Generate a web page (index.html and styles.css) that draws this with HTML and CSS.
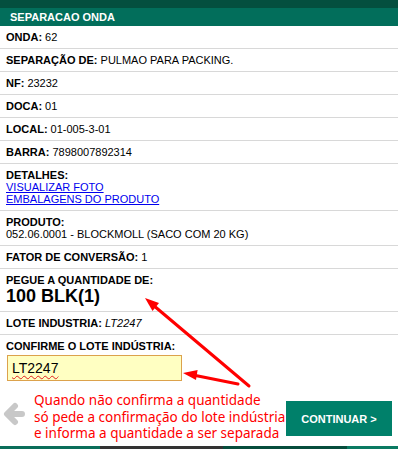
FILE: index.html
```html
<!DOCTYPE html>
<html lang="pt-BR">
<head>
    <meta charset="UTF-8">
    <meta name="viewport" content="width=device-width, initial-scale=1.0">
    <title>Separacao Onda</title>
    <link rel="stylesheet" href="styles.css">
</head>
<body>

    <div class="topbar"></div>
    <div class="header">SEPARACAO ONDA</div>

    <div class="rows">
        <div class="row"><b>ONDA:</b> 62</div>
        <div class="row"><b>SEPARAÇÃO DE:</b> PULMAO PARA PACKING.</div>
        <div class="row"><b>NF:</b> 23232</div>
        <div class="row"><b>DOCA:</b> 01</div>
        <div class="row"><b>LOCAL:</b> 01-005-3-01</div>
        <div class="row"><b>BARRA:</b> 7898007892314</div>
        <div class="row">
            <b>DETALHES:</b><br>
            <a href="#">VISUALIZAR FOTO</a><br>
            <a href="#">EMBALAGENS DO PRODUTO</a>
        </div>
        <div class="row">
            <b>PRODUTO:</b><br>
            052.06.0001 - BLOCKMOLL (SACO COM 20 KG)
        </div>
        <div class="row"><b>FATOR DE CONVERSÃO:</b> 1</div>
        <div class="row">
            <b>PEGUE A QUANTIDADE DE:</b>
            <div class="qty">100 BLK(1)</div>
        </div>
        <div class="row"><b>LOTE INDUSTRIA:</b> <i>LT2247</i></div>
        <div class="row last">
            <b>CONFIRME O LOTE INDÚSTRIA:</b>
            <div class="input-box"><span class="typo">LT2247</span></div>
        </div>
    </div>

    <div class="footer">
        <svg class="back" width="22" height="30" viewBox="0 0 22 30">
            <path d="M19 15 H5 M12 7 L4 15 L12 23" fill="none" stroke="#c8c8c8" stroke-width="6" stroke-linecap="round" stroke-linejoin="round"/>
        </svg>
        <p class="note">Quando não confirma a quantidade<br>só pede a confirmação do lote indústria<br>e informa a quantidade a ser separada</p>
        <button class="btn">CONTINUAR &gt;</button>
    </div>

    <div class="strip">
        <span class="s1"></span><span class="s2"></span><span class="s3"></span><span class="s4"></span>
    </div>

    <!-- setas vermelhas da anotação -->
    <svg class="callouts" width="398" height="450" viewBox="0 0 398 450">
        <line x1="249" y1="386" x2="153" y2="305" stroke="#ff0000" stroke-width="3" stroke-linecap="round"/>
        <polygon points="145,298 159,303 152.5,311" fill="#ff0000"/>
        <line x1="238" y1="384" x2="193" y2="375" stroke="#ff0000" stroke-width="3" stroke-linecap="round"/>
        <polygon points="183,373 197.6,370 196,380" fill="#ff0000"/>
    </svg>

</body>
</html>
```

FILE: styles.css
```css
body {
    font-family: "Liberation Sans", Arial, sans-serif;
    font-size: 11px;
    color: #000;
    margin: 0;
    padding: 0;
    width: 398px;
    height: 450px;
    position: relative;
    overflow: hidden;
    background: #fff;
}
.topbar {
    height: 8px;
    background: #044f3f;
}
.header {
    height: 18px;
    line-height: 18px;
    padding-left: 10px;
    background: #026e5b;
    color: #fff;
    font-weight: bold;
}
.row {
    padding: 5px 6px;
    line-height: 12px;
    border-bottom: 1px solid #d8d8d8;
}
.row.last {
    border-bottom: none;
}
.row a {
    color: #0000ee;
}
.qty {
    font-size: 18px;
    font-weight: bold;
    line-height: 20px;
}
.input-box {
    margin: 3px 0 0 1px;
    width: 169px;
    height: 24px;
    line-height: 24px;
    padding-left: 4px;
    border: 1px solid #dca24c;
    background: #ffffc2;
    font-size: 14px;
}
.typo {
    text-decoration: underline wavy #e02020;
    text-decoration-thickness: 1px;
    text-underline-offset: 2px;
}
.footer {
    display: flex;
    align-items: flex-start;
    height: 60px;
}
.back {
    margin: 13px 0 0 3px;
}
.note {
    margin: 6px 0 0 9px;
    font-family: "Noto Sans", sans-serif;
    font-size: 13.5px;
    line-height: 16.5px;
    color: #ff0000;
    width: 252px;
    white-space: nowrap;
}
.btn {
    margin: 15px 0 0 0;
    width: 106px;
    height: 35px;
    background: #00806a;
    color: #fff;
    border: none;
    font-family: "Liberation Sans", Arial, sans-serif;
    font-size: 11px;
    font-weight: bold;
    cursor: pointer;
}
.strip {
    display: flex;
    height: 3px;
}
.strip span {
    display: block;
    height: 3px;
}
.s1 { width: 100px; background: #0a6e5a; }
.s2 { width: 123px; background: #333; }
.s3 { width: 124px; background: #064d3c; }
.s4 { flex: 1; background: #0a7a62; }
.callouts {
    position: absolute;
    top: 0;
    left: 0;
    pointer-events: none;
}
```
